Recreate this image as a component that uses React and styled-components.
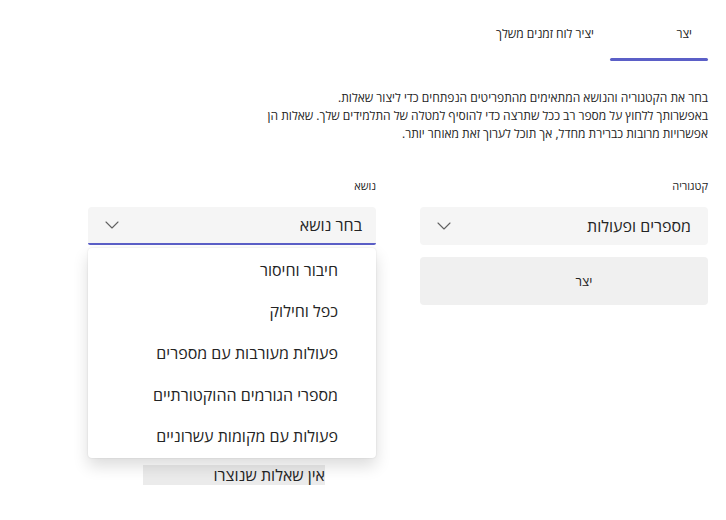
import React from 'react';
import styled, { createGlobalStyle } from 'styled-components';

const GlobalStyle = createGlobalStyle`
  html, body {
    margin: 0;
    padding: 0;
    background: #ffffff;
  }
  body {
    font-family: "Open Sans", "Liberation Sans", sans-serif;
    color: #242424;
  }
`;

const topics = [
  'חיבור וחיסור',
  'כפל וחילוק',
  'פעולות מעורבות עם מספרים',
  'מספרי הגורמים ההוקטורתיים',
  'פעולות עם מקומות עשרוניים',
];

const Chevron = () => (
  <svg width="14" height="8" viewBox="0 0 14 8" fill="none">
    <path d="M1 1l6 6 6-6" stroke="#616161" strokeWidth="1.1" strokeLinecap="round" strokeLinejoin="round" />
  </svg>
);

class App extends React.Component {
  render() {
    return (
      <Page dir="rtl">
        <GlobalStyle />
        <Tabs>
          <Tab active>
            <span>יצר</span>
          </Tab>
          <Tab>
            <span>יציר לוח זמנים משלך</span>
          </Tab>
        </Tabs>

        <Intro>
          <p>בחר את הקטגוריה והנושא המתאימים מהתפריטים הנפתחים כדי ליצור שאלות.</p>
          <p>
            באפשרותך ללחוץ על מספר רב ככל שתרצה כדי להוסיף למטלה של התלמידים שלך. שאלות הן
            אפשרויות מרובות כברירת מחדל, אך תוכל לערוך זאת מאוחר יותר.
          </p>
        </Intro>

        <Fields>
          <Column>
            <Label>קטגוריה</Label>
            <Select>
              <span>מספרים ופעולות</span>
              <Chevron />
            </Select>
            <CreateButton>
              <span>יצר</span>
            </CreateButton>
          </Column>

          <Column>
            <Label>נושא</Label>
            <SelectWrap>
              <Select open>
                <span>בחר נושא</span>
                <Chevron />
              </Select>
              <Menu>
                {topics.map((t) => (
                  <Option key={t}>{t}</Option>
                ))}
              </Menu>
            </SelectWrap>
            <Empty>
              <span>אין שאלות שנוצרו</span>
            </Empty>
          </Column>
        </Fields>
      </Page>
    );
  }
}

const Page = styled.div`
  width: 726px;
  height: 520px;
  box-sizing: border-box;
  padding: 0 18px 0 18px;
  overflow: hidden;
`;

const Tabs = styled.div`
  display: flex;
  height: 62px;
  align-items: stretch;
`;

const Tab = styled.div`
  position: relative;
  min-width: 98px;
  box-sizing: border-box;
  padding: 25px 16px 0 20px;
  font-size: 12px;
  line-height: 18px;
  color: #242424;
  &::after {
    content: '';
    display: ${(props) => (props.active ? 'block' : 'none')};
    position: absolute;
    left: 0;
    right: 0;
    bottom: 1px;
    height: 3px;
    border-radius: 2px;
    background: #5b5fc7;
  }
`;

const Intro = styled.div`
  margin-top: 27px;
  max-width: 465px;
  font-size: 12px;
  line-height: 18px;
  p {
    margin: 0;
  }
`;

const Fields = styled.div`
  display: grid;
  grid-template-columns: 288px 288px;
  column-gap: 44px;
  margin-top: 35px;
`;

const Column = styled.div`
  display: flex;
  flex-direction: column;
`;

const Label = styled.div`
  font-size: 11px;
  line-height: 16px;
  margin-bottom: 13px;
`;

const SelectWrap = styled.div`
  position: relative;
`;

const Select = styled.div`
  height: 38px;
  box-sizing: border-box;
  display: flex;
  align-items: center;
  justify-content: space-between;
  padding: 0 ${(props) => (props.open ? '14px' : '17px')} 0 17px;
  background: #f5f5f5;
  border-radius: 4px;
  font-size: 16px;
  border-bottom: ${(props) => (props.open ? '2px solid #5b5fc7' : 'none')};
  border-bottom-left-radius: ${(props) => (props.open ? '2px' : '4px')};
  border-bottom-right-radius: ${(props) => (props.open ? '2px' : '4px')};
`;

const CreateButton = styled.div`
  margin-top: 12px;
  height: 48px;
  display: flex;
  align-items: center;
  justify-content: center;
  background: #f0f0f0;
  border-radius: 4px;
  font-size: 13px;
  span {
    margin-left: 40px;
  }
`;

const Menu = styled.div`
  position: absolute;
  top: 41px;
  left: 0;
  right: 0;
  padding: 1px 0;
  background: #ffffff;
  border-radius: 4px;
  box-shadow: 0 8px 16px rgba(0, 0, 0, 0.14), 0 0 2px rgba(0, 0, 0, 0.12);
  z-index: 2;
`;

const Option = styled.div`
  height: 41.6px;
  display: flex;
  align-items: center;
  padding-right: 38px;
  font-size: 16px;
  color: #242424;
`;

const Empty = styled.div`
  margin-top: 220px;
  padding-right: 51px;
  display: flex;
  span {
    width: 182px;
    height: 20px;
    line-height: 20px;
    background: #ebebeb;
    font-size: 16px;
  }
`;

export default App;
